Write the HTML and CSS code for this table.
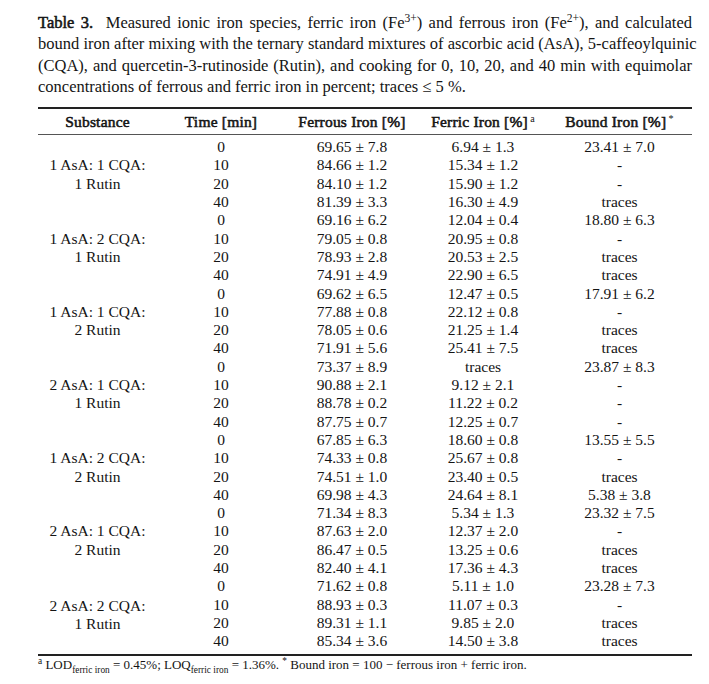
FILE: index.html
```html
<!DOCTYPE html>
<html lang="en">
<head>
    <meta charset="UTF-8">
    <meta name="viewport" content="width=device-width, initial-scale=1.0">
    <title>Table 3</title>
    <link rel="stylesheet" href="styles.css">
</head>
<body>
    <div class="page">
        <p class="caption">
            <span class="line"><span class="strong">Table 3.</span>&nbsp; Measured ionic iron species, ferric iron (Fe<sup>3+</sup>) and ferrous iron (Fe<sup>2+</sup>), and calculated</span>
            <span class="line">bound iron after mixing with the ternary standard mixtures of ascorbic acid (AsA), 5-caffeoylquinic</span>
            <span class="line">(CQA), and quercetin-3-rutinoside (Rutin), and cooking for 0, 10, 20, and 40 min with equimolar</span>
            <span class="line last">concentrations of ferrous and ferric iron in percent; traces &le; 5 %.</span>
        </p>

        <table class="data">
            <colgroup>
                <col class="c-sub">
                <col class="c-time">
                <col class="c-fe2">
                <col class="c-fe3">
                <col class="c-bound">
            </colgroup>
            <thead>
                <tr>
                    <th>Substance</th>
                    <th>Time [min]</th>
                    <th>Ferrous Iron [%]</th>
                    <th>Ferric Iron [%]<sup>&thinsp;a</sup></th>
                    <th>Bound Iron [%]<sup>&thinsp;*</sup></th>
                </tr>
            </thead>
            <tbody>
                <tr class="first">
                    <td rowspan="4" class="sub">1 AsA: 1 CQA:<br>1 Rutin</td>
                    <td>0</td><td>69.65 &plusmn; 7.8</td><td>6.94 &plusmn; 1.3</td><td>23.41 &plusmn; 7.0</td>
                </tr>
                <tr><td>10</td><td>84.66 &plusmn; 1.2</td><td>15.34 &plusmn; 1.2</td><td>-</td></tr>
                <tr><td>20</td><td>84.10 &plusmn; 1.2</td><td>15.90 &plusmn; 1.2</td><td>-</td></tr>
                <tr><td>40</td><td>81.39 &plusmn; 3.3</td><td>16.30 &plusmn; 4.9</td><td>traces</td></tr>

                <tr>
                    <td rowspan="4" class="sub">1 AsA: 2 CQA:<br>1 Rutin</td>
                    <td>0</td><td>69.16 &plusmn; 6.2</td><td>12.04 &plusmn; 0.4</td><td>18.80 &plusmn; 6.3</td>
                </tr>
                <tr><td>10</td><td>79.05 &plusmn; 0.8</td><td>20.95 &plusmn; 0.8</td><td>-</td></tr>
                <tr><td>20</td><td>78.93 &plusmn; 2.8</td><td>20.53 &plusmn; 2.5</td><td>traces</td></tr>
                <tr><td>40</td><td>74.91 &plusmn; 4.9</td><td>22.90 &plusmn; 6.5</td><td>traces</td></tr>

                <tr>
                    <td rowspan="4" class="sub">1 AsA: 1 CQA:<br>2 Rutin</td>
                    <td>0</td><td>69.62 &plusmn; 6.5</td><td>12.47 &plusmn; 0.5</td><td>17.91 &plusmn; 6.2</td>
                </tr>
                <tr><td>10</td><td>77.88 &plusmn; 0.8</td><td>22.12 &plusmn; 0.8</td><td>-</td></tr>
                <tr><td>20</td><td>78.05 &plusmn; 0.6</td><td>21.25 &plusmn; 1.4</td><td>traces</td></tr>
                <tr><td>40</td><td>71.91 &plusmn; 5.6</td><td>25.41 &plusmn; 7.5</td><td>traces</td></tr>

                <tr>
                    <td rowspan="4" class="sub">2 AsA: 1 CQA:<br>1 Rutin</td>
                    <td>0</td><td>73.37 &plusmn; 8.9</td><td>traces</td><td>23.87 &plusmn; 8.3</td>
                </tr>
                <tr><td>10</td><td>90.88 &plusmn; 2.1</td><td>9.12 &plusmn; 2.1</td><td>-</td></tr>
                <tr><td>20</td><td>88.78 &plusmn; 0.2</td><td>11.22 &plusmn; 0.2</td><td>-</td></tr>
                <tr><td>40</td><td>87.75 &plusmn; 0.7</td><td>12.25 &plusmn; 0.7</td><td>-</td></tr>

                <tr>
                    <td rowspan="4" class="sub">1 AsA: 2 CQA:<br>2 Rutin</td>
                    <td>0</td><td>67.85 &plusmn; 6.3</td><td>18.60 &plusmn; 0.8</td><td>13.55 &plusmn; 5.5</td>
                </tr>
                <tr><td>10</td><td>74.33 &plusmn; 0.8</td><td>25.67 &plusmn; 0.8</td><td>-</td></tr>
                <tr><td>20</td><td>74.51 &plusmn; 1.0</td><td>23.40 &plusmn; 0.5</td><td>traces</td></tr>
                <tr><td>40</td><td>69.98 &plusmn; 4.3</td><td>24.64 &plusmn; 8.1</td><td>5.38 &plusmn; 3.8</td></tr>

                <tr>
                    <td rowspan="4" class="sub">2 AsA: 1 CQA:<br>2 Rutin</td>
                    <td>0</td><td>71.34 &plusmn; 8.3</td><td>5.34 &plusmn; 1.3</td><td>23.32 &plusmn; 7.5</td>
                </tr>
                <tr><td>10</td><td>87.63 &plusmn; 2.0</td><td>12.37 &plusmn; 2.0</td><td>-</td></tr>
                <tr><td>20</td><td>86.47 &plusmn; 0.5</td><td>13.25 &plusmn; 0.6</td><td>traces</td></tr>
                <tr><td>40</td><td>82.40 &plusmn; 4.1</td><td>17.36 &plusmn; 4.3</td><td>traces</td></tr>

                <tr>
                    <td rowspan="4" class="sub">2 AsA: 2 CQA:<br>1 Rutin</td>
                    <td>0</td><td>71.62 &plusmn; 0.8</td><td>5.11 &plusmn; 1.0</td><td>23.28 &plusmn; 7.3</td>
                </tr>
                <tr><td>10</td><td>88.93 &plusmn; 0.3</td><td>11.07 &plusmn; 0.3</td><td>-</td></tr>
                <tr><td>20</td><td>89.31 &plusmn; 1.1</td><td>9.85 &plusmn; 2.0</td><td>traces</td></tr>
                <tr class="last"><td>40</td><td>85.34 &plusmn; 3.6</td><td>14.50 &plusmn; 3.8</td><td>traces</td></tr>
            </tbody>
        </table>

        <p class="note">
            <sup>a</sup> LOD<sub>ferric iron</sub> = 0.45%; LOQ<sub>ferric iron</sub> = 1.36%. <sup>*</sup> Bound iron = 100 &minus; ferrous iron + ferric iron.
        </p>
    </div>
</body>
</html>
```

FILE: styles.css
```css
body {
    margin: 0;
    background-color: #ffffff;
    color: #141414;
    font-family: "Liberation Serif", "Times New Roman", serif;
}

.page {
    width: 654px;
    padding: 12px 0 0 38px;
}

/* bold via stroke, keeps the serif face */
.strong,
.data th {
    font-weight: normal;
    -webkit-text-stroke: 0.55px currentColor;
}

/* --- caption --- */
.caption {
    margin: 0 0 10px;
    font-size: 16.5px;
    line-height: 21.3px;
}

.caption .line {
    display: block;
    text-align: justify;
    text-align-last: justify;
    white-space: nowrap;
}

.caption .line.last {
    text-align-last: left;
}

.caption sup {
    font-size: 0.7em;
    line-height: 0;
}

/* --- table --- */
.data {
    width: 654px;
    border-collapse: collapse;
    table-layout: fixed;
    font-size: 15.5px;
}

.c-sub { width: 119px; }
.c-time { width: 128px; }
.c-fe2 { width: 134px; }
.c-fe3 { width: 128px; }
.c-bound { width: 145px; }

.data thead tr {
    border-top: 2px solid #222;
    border-bottom: 1px solid #555;
}

.data th {
    height: 25px;
    padding: 0;
    text-align: center;
    vertical-align: middle;
    letter-spacing: 0.2px;
}

.data th sup {
    font-size: 0.65em;
    -webkit-text-stroke: 0;
    line-height: 0;
    vertical-align: 0.45em;
}

.data td {
    height: 18.3px;
    padding: 0;
    line-height: 18.3px;
    text-align: center;
    white-space: nowrap;
}

.data td.sub {
    vertical-align: middle;
}

.data tr.first td {
    padding-top: 3px;
}

.data tr.last td {
    padding-bottom: 3px;
}

.data tbody {
    border-bottom: 2px solid #222;
}

/* --- footnote --- */
.note {
    margin: 0;
    font-size: 13px;
    line-height: 17px;
}

.note sup,
.note sub {
    font-size: 0.72em;
    line-height: 0;
}
```
